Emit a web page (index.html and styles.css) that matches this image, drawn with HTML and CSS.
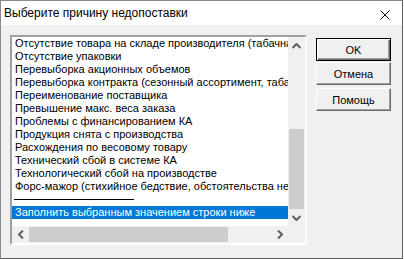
FILE: index.html
```html
<!DOCTYPE html>
<html lang="ru">
<head>
  <meta charset="UTF-8">
  <title>Выберите причину недопоставки</title>
  <link rel="stylesheet" href="styles.css">
</head>
<body>
  <div class="window">
    <div class="titlebar">
      <span class="title">Выберите причину недопоставки</span>
      <svg class="close" width="10" height="10" viewBox="0 0 10 10">
        <path d="M0.5 0.5 L9.5 9.5 M9.5 0.5 L0.5 9.5" stroke="#000" stroke-width="1" fill="none"/>
      </svg>
    </div>
    <div class="client">
      <div class="listbox">
        <div class="items">
          <div class="item">Отсутствие товара на складе производителя (табачная продукция)</div>
          <div class="item">Отсутствие упаковки</div>
          <div class="item">Перевыборка акционных объемов</div>
          <div class="item">Перевыборка контракта (сезонный ассортимент, табачная продукция)</div>
          <div class="item">Переименование поставщика</div>
          <div class="item">Превышение макс. веса заказа</div>
          <div class="item">Проблемы с финансированием КА</div>
          <div class="item">Продукция снята с производства</div>
          <div class="item">Расхождения по весовому товару</div>
          <div class="item">Технический сбой в системе КА</div>
          <div class="item">Технологический сбой на производстве</div>
          <div class="item">Форс-мажор (стихийное бедствие, обстоятельства непреодолимой силы)</div>
          <div class="item separator"><span class="rule"></span></div>
          <div class="item selected">Заполнить выбранным значением строки ниже</div>
        </div>
        <div class="vscroll">
          <div class="arrow">
            <svg width="9" height="6" viewBox="0 0 9 6"><path d="M0.5 5 L4.5 1 L8.5 5" stroke="#606060" stroke-width="2" fill="none"/></svg>
          </div>
          <div class="vtrack"><div class="vthumb"></div></div>
          <div class="arrow">
            <svg width="9" height="6" viewBox="0 0 9 6"><path d="M0.5 1 L4.5 5 L8.5 1" stroke="#606060" stroke-width="2" fill="none"/></svg>
          </div>
        </div>
        <div class="hscroll">
          <div class="arrow">
            <svg width="6" height="9" viewBox="0 0 6 9"><path d="M5 0.5 L1 4.5 L5 8.5" stroke="#606060" stroke-width="2" fill="none"/></svg>
          </div>
          <div class="htrack"><div class="hthumb"></div></div>
          <div class="arrow">
            <svg width="6" height="9" viewBox="0 0 6 9"><path d="M1 0.5 L5 4.5 L1 8.5" stroke="#606060" stroke-width="2" fill="none"/></svg>
          </div>
        </div>
        <div class="corner"></div>
      </div>
      <div class="buttons">
        <button class="btn default">OK</button>
        <button class="btn">Отмена</button>
        <button class="btn help">Помощь</button>
      </div>
    </div>
  </div>
</body>
</html>
```

FILE: styles.css
```css
body {
  margin: 0;
  background: #ffffff;
  font-family: "Liberation Sans", Arial, sans-serif;
}
.window {
  width: 401px;
  height: 257px;
  border: 1px solid #8a8a8a;
  border-right-color: #5f5f5f;
  border-bottom-color: #5f5f5f;
  background: #f0f0f0;
  display: flex;
  flex-direction: column;
}
.titlebar {
  height: 24px;
  background: #fff;
  display: flex;
  align-items: center;
  padding-left: 3px;
}
.title {
  font-size: 12px;
  color: #000;
  flex: 1;
  padding-bottom: 1px;
}
.close {
  margin-right: 12px;
  margin-top: 4px;
}
.client {
  flex: 1;
  display: flex;
  padding: 12px 0 0 11px;
}
.listbox {
  width: 293px;
  height: 206px;
  border: 2px solid;
  border-color: #a0a0a0 #ffffff #ffffff #a0a0a0;
  box-shadow: inset 1px 1px 0 #696969, inset -1px -1px 0 #e3e3e3;
  display: grid;
  grid-template-columns: 276px 17px;
  grid-template-rows: 189px 17px;
  background: #fff;
  margin-top: -2px;
  margin-left: -2px;
}
.items {
  overflow: hidden;
  font-size: 11px;
  background: #fff;
}
.item {
  height: 13px;
  line-height: 13px;
  padding-left: 3px;
  white-space: nowrap;
  overflow: hidden;
  color: #000;
}
.item.selected {
  background: #0078d7;
  color: #fff;
}
.rule {
  display: block;
  width: 120px;
  height: 1px;
  background: #000;
  margin: 6px 0 0 -1px;
}
.vscroll {
  background: #f0f0f0;
  display: flex;
  flex-direction: column;
}
.hscroll {
  background: #f0f0f0;
  display: flex;
}
.arrow {
  width: 17px;
  height: 17px;
  display: flex;
  align-items: center;
  justify-content: center;
  flex: none;
}
.vtrack {
  flex: 1;
  padding: 0 1px;
}
.vthumb {
  margin-top: 75px;
  height: 80px;
  background: #cdcdcd;
}
.htrack {
  flex: 1;
  padding: 1px 0;
}
.hthumb {
  width: 199px;
  height: 15px;
  background: #cdcdcd;
}
.corner {
  background: #f0f0f0;
}
.buttons {
  margin-left: 9px;
  padding-top: 1px;
  display: flex;
  flex-direction: column;
}
.btn {
  width: 75px;
  height: 23px;
  padding: 0;
  margin: 0 0 1px 0;
  font-family: "Liberation Sans", Arial, sans-serif;
  font-size: 11px;
  font-weight: normal;
  color: #000;
  background: #f0f0f0;
  border: 1px solid;
  border-color: #ffffff #696969 #696969 #ffffff;
  box-shadow: inset -1px -1px 0 #a0a0a0;
}
.btn.default {
  border-color: #000;
  box-shadow: inset 1px 1px 0 #ffffff, inset -1px -1px 0 #696969, inset -2px -2px 0 #a0a0a0;
}
.btn.help {
  margin-top: 2px;
}
```
